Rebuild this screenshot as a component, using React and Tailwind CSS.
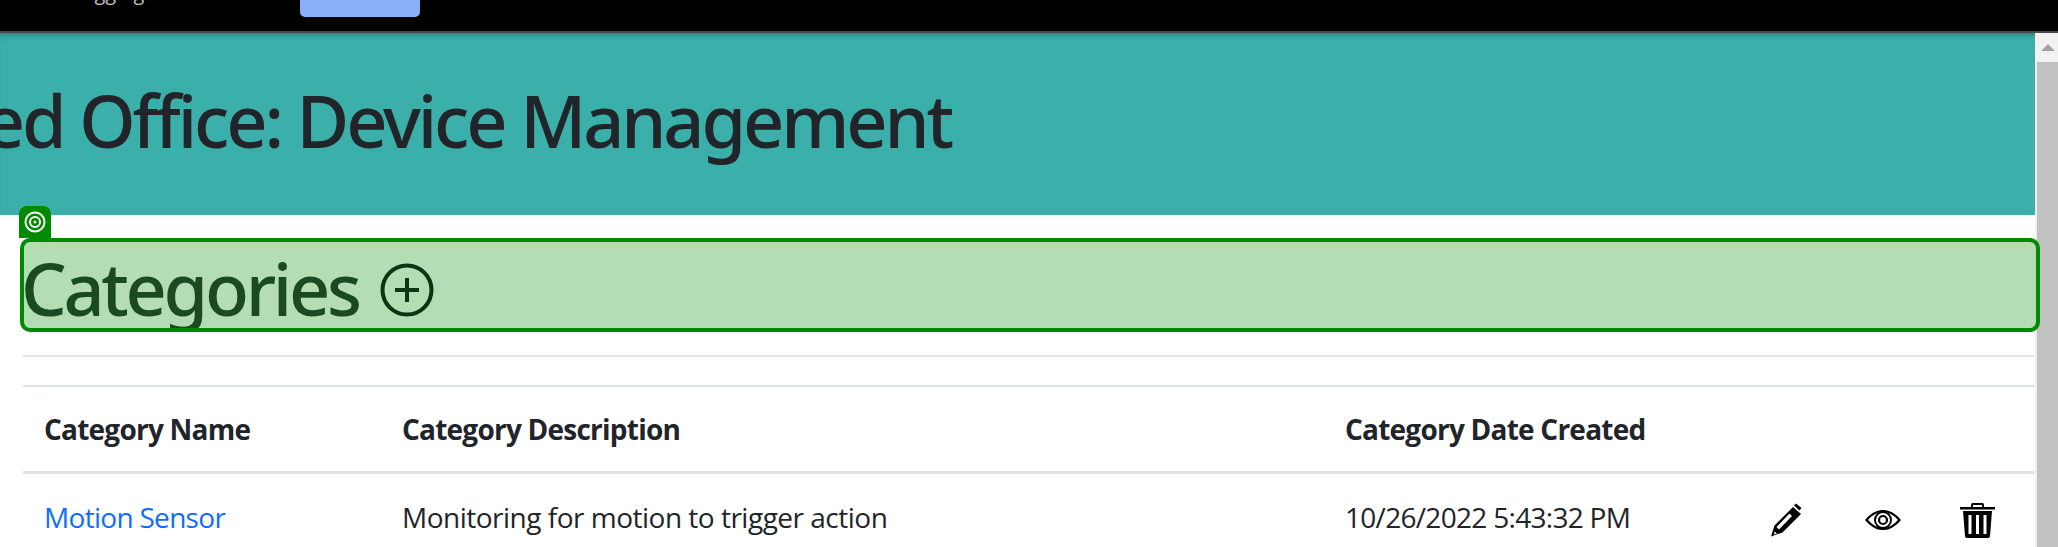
import React from 'react';

const PencilIcon = () => (
    <svg width="32" height="34" viewBox="0 0 32 34" fill="none">
        <path d="M1 33.500l3.500-11L23 4l8 7L12.500 29.500z" fill="#000" />
        <path d="M6.500 24l2.500 2.500L22 13l-2.500-2.500z" fill="#fff" />
        <path d="M4.500 28.500l2.500 2-3 1z" fill="#fff" />
        <path d="M24 2.500l2-2 5.500 4.500-2 2.500z" fill="#000" />
    </svg>
);

const EyeIcon = () => (
    <svg width="36" height="20" viewBox="0 0 36 20" fill="none" stroke="#000">
        <path d="M1.500 10C7 3.500 12 1 18 1s11 2.500 16.500 9C29 16.500 24 19 18 19S7 16.500 1.500 10z" strokeWidth="2.200" />
        <circle cx="18" cy="10" r="8" strokeWidth="2" />
        <circle cx="18" cy="10" r="4" strokeWidth="2.200" />
    </svg>
);

const TrashIcon = () => (
    <svg width="36" height="36" viewBox="0 0 36 36" fill="none">
        <path d="M0 5h35v2.500H0z" fill="#000" />
        <path d="M11 5V3c0-1.500 1-2 2-2h9c1 0 2 .500 2 2v2h-2V3h-9v2z" fill="#000" />
        <path d="M3 9h29l-2 25c0 1-1 2-2 2H7c-1 0-2-1-2-2z" fill="#000" />
        <path d="M8.500 13h3v19h-3zM16 13h3v19h-3zM23.500 13h3v19h-3z" fill="#fff" />
    </svg>
);

const Row = ({ name, description, created }) => (
    <div className="flex items-center h-[86px] text-[28px] tracking-[-0.7px] text-[#212529]">
        <a href="#" className="w-[379px] pl-[21px] text-[#0d6efd]">{name}</a>
        <div className="w-[943px] tracking-[-0.5px]">{description}</div>
        <div className="w-[425px]">{created}</div>
        <div className="flex items-center mt-[6px]">
            <div className="w-[95px]"><PencilIcon /></div>
            <div className="w-[95px]"><EyeIcon /></div>
            <TrashIcon />
        </div>
    </div>
);

export default function App() {
    return (
        <div className="h-[547px] overflow-hidden flex flex-col bg-white font-['Open_Sans',sans-serif]">

            {/* Top nav, scrolled so only its bottom edge shows */}
            <header className="h-[33px] shrink-0 bg-black border-b-2 border-[#4a4a4a] flex items-start overflow-hidden">
                <span className="ml-[72px] mt-[-17px] w-[228px] text-[20px] leading-[20px] text-[#bbbbbb]">Logging</span>
                <div className="w-[120px] h-[17px] bg-[#8ab0f8] rounded-b-[5px]" />
            </header>

            <div className="flex-1 flex min-h-0">
                <div className="flex-1 min-w-0">

                    {/* Title banner */}
                    <div className="h-[182px] bg-[#3bafa9] shadow-[inset_0_6px_6px_-5px_rgba(0,0,0,0.35)] flex items-center overflow-hidden pb-[8px]">
                        <h1 className="ml-[-239px] whitespace-nowrap text-[72px] tracking-[-3.1px] font-medium font-['Noto_Sans',sans-serif] text-[#212529]">Managed Office: Device Management</h1>
                    </div>

                    {/* Highlighted heading */}
                    <div className="relative ml-[20px] mt-[23px] h-[94px] w-[2020px] border-[4px] border-[#008a00] rounded-[10px] bg-[#b4ddb4]">
                        <div className="absolute left-[-5px] top-[-36px] w-[32px] h-[32px] bg-[#008a00] rounded-t-[8px] flex items-center justify-center">
                            <svg width="22" height="22" viewBox="0 0 22 22" fill="none" stroke="#fff" strokeWidth="2">
                                <circle cx="11" cy="11" r="9.500" />
                                <circle cx="11" cy="11" r="5" />
                                <circle cx="11" cy="11" r="1.200" fill="#fff" strokeWidth="0.500" />
                            </svg>
                        </div>
                        <div className="h-full overflow-hidden rounded-[5px] flex items-center pt-[5px]">
                            <h2 className="text-[72px] tracking-[-3.3px] leading-none ml-[-3px] font-medium font-['Noto_Sans',sans-serif] text-[#1a4a20] flex items-center gap-[21px]">
                                Categories
                                <svg className="mt-[5px]" width="54" height="54" viewBox="0 0 54 54" fill="none" stroke="#0c3312" strokeWidth="4">
                                    <circle cx="27" cy="27" r="24.500" />
                                    <path d="M27 15v24M15 27h24" />
                                </svg>
                            </h2>
                        </div>
                    </div>

                    <div className="ml-[23px]">
                        <div className="mt-[23px] h-[2px] bg-[#e5e6e8]" />
                        <div className="mt-[28px] h-[2px] bg-[#dee2e6]" />

                        {/* Table header */}
                        <div className="flex items-center h-[87px] border-b-[3px] border-[#dee2e6] text-[28px] tracking-[-0.77px] font-bold text-[#212529]">
                            <div className="w-[379px] pl-[21px]">Category Name</div>
                            <div className="w-[943px]">Category Description</div>
                            <div>Category Date Created</div>
                        </div>

                        <Row
                            name="Motion Sensor"
                            description="Monitoring for motion to trigger action"
                            created="10/26/2022 5:43:32 PM"
                        />
                    </div>
                </div>

                {/* Scrollbar */}
                <div className="w-[23px] shrink-0 flex flex-col bg-[#f1f1f1]">
                    <div className="h-[29px] shrink-0 pl-[2px] flex items-center justify-center">
                        <div className="w-0 h-0 border-l-[7px] border-r-[7px] border-b-[7px] border-l-transparent border-r-transparent border-b-[#a3a3a3]" />
                    </div>
                    <div className="flex-1 ml-[2px] bg-[#c1c1c1]" />
                </div>
            </div>
        </div>
    );
}
